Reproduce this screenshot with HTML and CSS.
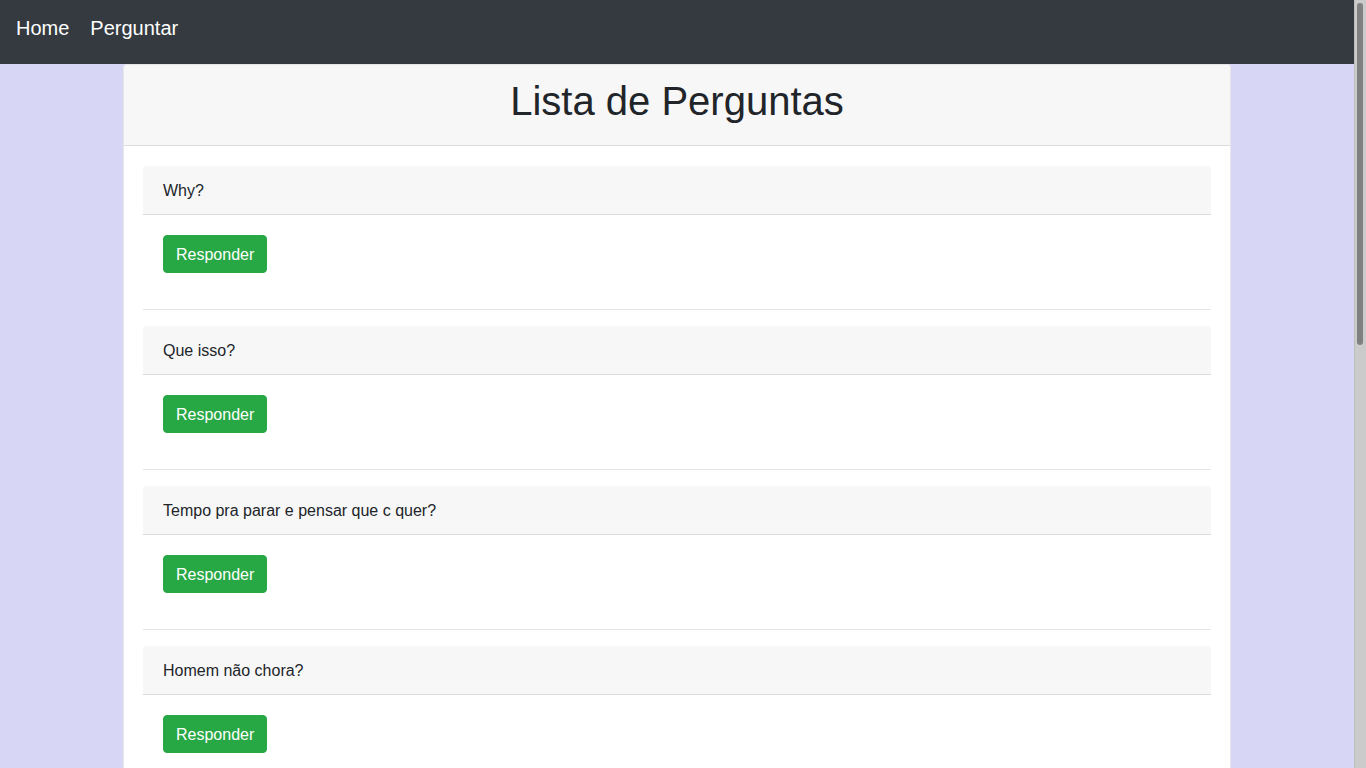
FILE: index.html
```html
<!DOCTYPE html>
<html lang="pt">
<head>
<meta charset="utf-8">
<title>Lista de Perguntas</title>
<link rel="stylesheet" href="styles.css">
</head>
<body>
<div class="window">
  <div class="page">
    <nav class="navbar">
      <a class="nav-link" href="#">Home</a>
      <a class="nav-link" href="#">Perguntar</a>
    </nav>
    <main class="container">
      <section class="card">
        <header class="card-header main-header">
          <h1>Lista de Perguntas</h1>
        </header>
        <div class="card-body">
          <div class="question">
            <div class="q-header">Why?</div>
            <div class="q-body"><button class="btn">Responder</button></div>
          </div>
          <hr>
          <div class="question">
            <div class="q-header">Que isso?</div>
            <div class="q-body"><button class="btn">Responder</button></div>
          </div>
          <hr>
          <div class="question">
            <div class="q-header">Tempo pra parar e pensar que c quer?</div>
            <div class="q-body"><button class="btn">Responder</button></div>
          </div>
          <hr>
          <div class="question">
            <div class="q-header">Homem não chora?</div>
            <div class="q-body"><button class="btn">Responder</button></div>
          </div>
          <hr>
        </div>
      </section>
    </main>
  </div>
  <div class="scrollbar"><div class="thumb"></div></div>
</div>
</body>
</html>
```

FILE: styles.css
```css
* { box-sizing: border-box; }
html, body { margin: 0; padding: 0; height: 100%; overflow: hidden; }
body {
  background: #d8d6f5;
  font-family: "Liberation Sans", Arial, sans-serif;
  font-size: 16px;
  line-height: 1.5;
  color: #212529;
}
.window {
  display: flex;
  height: 100%;
}
.page {
  flex: 1;
  min-width: 0;
  overflow: hidden;
}
.scrollbar {
  width: 12px;
  flex: none;
  background: #cbcbcb;
  border-left: 1px solid #bdbdbd;
  padding: 3px 2px 0 2px;
}
.thumb {
  width: 6px;
  height: 342px;
  background: #7f8080;
  border-radius: 3px;
}
.navbar {
  background: #343a40;
  height: 64px;
  display: flex;
  align-items: center;
  padding: 0 16px;
  gap: 21px;
}
.nav-link {
  color: #fff;
  text-decoration: none;
  font-size: 20px;
  line-height: 30px;
  margin-top: -8px;
}
.container {
  width: 1108px;
  margin: 0 auto;
}
.card {
  background: #fff;
  border: 1px solid #e6e6ea;
  border-bottom: 0;
  border-radius: 4px 4px 0 0;
}
.main-header {
  background: #f7f7f7;
  border-bottom: 1px solid #dcdcdc;
  padding: 12px 20px;
  text-align: center;
  border-radius: 4px 4px 0 0;
}
.main-header h1 {
  margin: 0 0 8px;
  font-size: 40px;
  font-weight: 400;
  line-height: 1.2;
}
.card-body {
  padding: 20px 19px;
}
.question {
  border-radius: 4px;
  background: #fff;
}
.q-header {
  background: #f7f7f7;
  padding: 13px 20px 11px;
  border-bottom: 1px solid #dcdcdc;
  border-radius: 4px 4px 0 0;
}
.q-body {
  padding: 20px;
}
.btn {
  font-family: inherit;
  font-size: 16px;
  line-height: 24px;
  padding: 7px 12px 5px;
  color: #fff;
  background: #28a745;
  border: 1px solid #28a745;
  border-radius: 4px;
  cursor: pointer;
}
hr {
  margin: 16px 0;
  border: 0;
  border-top: 1px solid #e5e5e5;
}
```
